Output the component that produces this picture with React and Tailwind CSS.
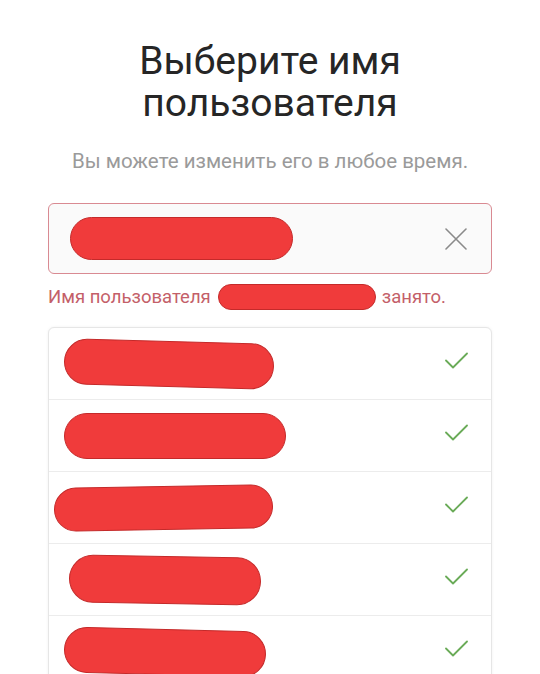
import React from 'react';

const rows = [
  { w: 'w-[210px]', h: 'h-[46px]', ml: 'ml-[15px]', tilt: 'rotate-[1.5deg]' },
  { w: 'w-[222px]', h: 'h-[46px]', ml: 'ml-[15px]', tilt: 'rotate-0' },
  { w: 'w-[219px]', h: 'h-[44px]', ml: 'ml-[5px]', tilt: '-rotate-[1deg]' },
  { w: 'w-[192px]', h: 'h-[48px]', ml: 'ml-[20px]', tilt: 'rotate-[1deg]' },
  { w: 'w-[202px]', h: 'h-[46px]', ml: 'ml-[15px]', tilt: 'rotate-[1.5deg]' },
];

function Redacted({ className }) {
  return <span className={`block shrink-0 rounded-full bg-[#f03b3b] border border-[#c42a2a] ${className}`} />;
}

function CheckIcon() {
  return (
    <svg width="24" height="24" viewBox="0 0 24 24" fill="none">
      <path d="M2 8.5l7 7L23 1.5" stroke="#6aab58" strokeWidth="1.8" strokeLinecap="round" strokeLinejoin="round" />
    </svg>
  );
}

function ClearIcon() {
  return (
    <svg width="22" height="22" viewBox="0 0 22 22" fill="none">
      <path d="M1 1l20 20M21 1L1 21" stroke="#8a8a8a" strokeWidth="1.6" strokeLinecap="round" />
    </svg>
  );
}

export default function App() {
  return (
    <div className="w-[540px] h-[674px] overflow-hidden bg-white px-12 pt-10 font-['Roboto','Liberation_Sans',sans-serif]">
      <h1 className="text-center text-[39px] leading-[42px] text-[#262626] font-normal">
        Выберите имя
        <br />
        пользователя
      </h1>
      <p className="mt-[25px] text-center text-[20.5px] leading-6 text-[#9a9a9a]">
        Вы можете изменить его в любое время.
      </p>

      <div className="mt-[30px] h-[71px] flex items-center justify-between rounded-md border border-[#d98a92] bg-[#fafafa] pl-[21px] pr-[24px]">
        <Redacted className="w-[223px] h-[43px]" />
        <ClearIcon />
      </div>

      <div className="mt-[11px] h-6 flex items-center text-[18.5px] leading-6 text-[#c45f69]">
        <span>Имя пользователя</span>
        <Redacted className="ml-[7px] w-[158px] h-[26px]" />
        <span className="ml-[6px]">занято.</span>
      </div>

      <div className="mt-[18px] rounded-md border border-[#e6e6e6] shadow-[0_0_3px_rgba(0,0,0,0.06)] bg-white">
        {rows.map((r, i) => (
          <div
            key={i}
            className={`flex items-center justify-between pr-[23px] ${i > 0 ? 'h-[72px] border-t border-[#ececec]' : 'h-[71px]'}`}
          >
            <Redacted className={`${r.w} ${r.h} ${r.ml} ${r.tilt}`} />
            <CheckIcon />
          </div>
        ))}
      </div>
    </div>
  );
}
